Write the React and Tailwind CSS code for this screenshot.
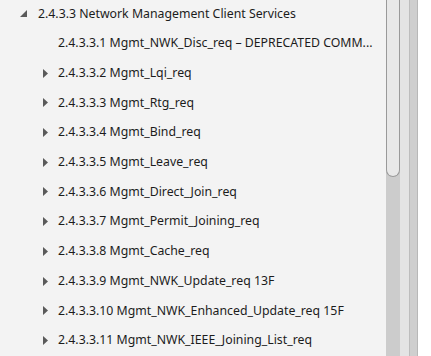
const items = [
  { label: '2.4.3.3.1 Mgmt_NWK_Disc_req – DEPRECATED COMM...', leaf: true },
  { label: '2.4.3.3.2 Mgmt_Lqi_req' },
  { label: '2.4.3.3.3 Mgmt_Rtg_req' },
  { label: '2.4.3.3.4 Mgmt_Bind_req' },
  { label: '2.4.3.3.5 Mgmt_Leave_req' },
  { label: '2.4.3.3.6 Mgmt_Direct_Join_req' },
  { label: '2.4.3.3.7 Mgmt_Permit_Joining_req' },
  { label: '2.4.3.3.8 Mgmt_Cache_req' },
  { label: '2.4.3.3.9 Mgmt_NWK_Update_req 13F' },
  { label: '2.4.3.3.10 Mgmt_NWK_Enhanced_Update_req 15F' },
  { label: '2.4.3.3.11 Mgmt_NWK_IEEE_Joining_List_req' },
];

function Collapsed() {
  return (
    <svg width="5" height="9" viewBox="0 0 5 9" className="shrink-0">
      <path d="M0 0 L5 4.5 L0 9 Z" fill="#5a5a5a" />
    </svg>
  );
}

function Expanded() {
  return (
    <svg width="7" height="7" viewBox="0 0 7 7" className="shrink-0">
      <path d="M7 0 L7 7 L0 7 Z" fill="#5a5a5a" />
    </svg>
  );
}

export default function App() {
  return (
    <div className="flex w-[431px] h-[356px] overflow-hidden bg-white font-['Noto_Sans',sans-serif] text-[12.3px] text-[#1c1c1c]">
      <div className="w-[386px] bg-[#f3f3f3]">
        <div className="-mt-[1px]">
          <div className="flex items-center h-[29.7px] pl-[20px]">
            <Expanded />
            <span className="ml-[11px] whitespace-nowrap">2.4.3.3 Network Management Client Services</span>
          </div>
          {items.map((it) => (
            <div key={it.label} className="flex items-center h-[29.7px] pl-[43px] pr-[4px]">
              <div className="w-[5px] flex justify-center">{!it.leaf && <Collapsed />}</div>
              <span className="ml-[10px] whitespace-nowrap">{it.label}</span>
            </div>
          ))}
        </div>
      </div>
      <div className="w-[14px] bg-[#cccccc] flex flex-col">
        <div className="h-[177px] bg-[#e8e8e8] border border-t-0 border-[#999999] rounded-b-[7px]" />
      </div>
      <div className="w-[9px] bg-[#e4e4e4]" />
      <div className="w-[9px] bg-[#cfcfcf] border-l border-[#bdbdbd] border-r border-r-[#b8b8b8]" />
      <div className="flex-1 bg-white" />
    </div>
  );
}
